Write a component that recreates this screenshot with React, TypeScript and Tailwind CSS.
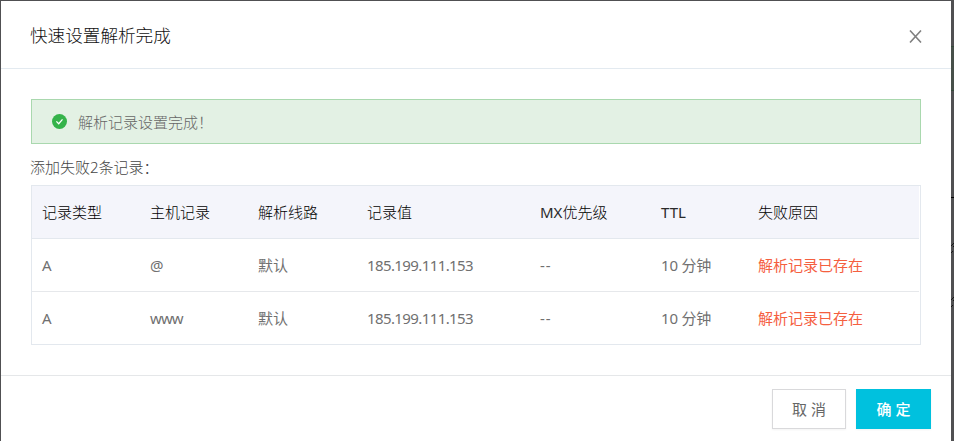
import React from "react";

type Row = {
  type: string;
  host: string;
  line: string;
  value: string;
  mx: string;
  ttl: string;
  reason: string;
};

const rows: Row[] = [
  { type: "A", host: "@", line: "默认", value: "185.199.111.153", mx: "--", ttl: "10 分钟", reason: "解析记录已存在" },
  { type: "A", host: "www", line: "默认", value: "185.199.111.153", mx: "--", ttl: "10 分钟", reason: "解析记录已存在" },
];

const columns = "grid grid-cols-[108px_108px_109px_173px_121px_97px_1fr] items-center pl-[10px] mr-px";

function CheckIcon() {
  return (
    <svg className="h-[15px] w-[15px] shrink-0" viewBox="0 0 15 15">
      <circle cx="7.5" cy="7.5" r="7.5" fill="#35b34a" />
      <path d="M4.4 7.4 L6.7 9.7 L10.5 5.3" fill="none" stroke="#fff" strokeWidth="1.3" />
    </svg>
  );
}

function CloseIcon() {
  return (
    <svg className="block h-[13px] w-[13px]" viewBox="0 0 13 13">
      <path d="M1 0.5 L12 12.5 M12 0.5 L1 12.5" fill="none" stroke="#808080" strokeWidth="1.6" />
    </svg>
  );
}

/* Sliver of the dimmed page visible beside the dialog. */
function Backdrop() {
  return (
    <svg className="absolute top-0 right-0 h-[441px] w-[3px]" viewBox="0 0 3 441" shapeRendering="crispEdges">
      <rect x="0" y="46" width="3" height="45" fill="#47504a" />
      <rect x="0" y="46" width="3" height="1" fill="#34493a" />
      <rect x="0" y="90" width="3" height="1" fill="#34493a" />
      <rect x="0" y="197" width="3" height="1" fill="#000" />
      <path d="M2 243h1v1h-1z M1 244h1v1h-1z M0 245h1v1h-1z M2 246h1v1h-1z M1 251h1v1h-1z M0 252h1v1h-1z" fill="#161616" />
      <path d="M2 297h1v1h-1z M1 298h1v1h-1z M0 299h1v1h-1z M2 300h1v1h-1z M1 305h1v1h-1z M0 306h1v1h-1z" fill="#161616" />
    </svg>
  );
}

function Header() {
  return (
    <header className="flex h-[68px] shrink-0 items-center justify-between border-b border-[#e3eaf0] pr-[29px] pl-[29px]">
      <h1 className="text-[17.6px] leading-6 font-light text-[#111]">快速设置解析完成</h1>
      <button className="mt-[4px]" aria-label="关闭">
        <CloseIcon />
      </button>
    </header>
  );
}

function RecordTable() {
  return (
    <section className="mt-[7px] h-[160px] border border-[#e3e8ee]">
      <div className={`${columns} h-[53px] border-b border-[#e3e8ee] bg-[#f4f5fb] font-light text-black`}>
        <span>记录类型</span>
        <span>主机记录</span>
        <span>解析线路</span>
        <span>记录值</span>
        <span>
          <span className="font-normal text-[#2a2a2a]">MX</span>优先级
        </span>
        <span className="font-normal text-[#2a2a2a]">TTL</span>
        <span>失败原因</span>
      </div>
      {rows.map((row, i) => (
        <div key={i} className={`${columns} text-[#707070] ${i === 0 ? "h-[53px] border-b border-[#e6e8eb]" : "h-[52px]"}`}>
          <span>{row.type}</span>
          <span className="tracking-[-0.9px]">{row.host}</span>
          <span>{row.line}</span>
          <span className="tracking-[-0.6px]">{row.value}</span>
          <span className="tracking-[0.8px]">{row.mx}</span>
          <span className="tracking-[-0.2px]">{row.ttl}</span>
          <span className="text-[#f5603f]">{row.reason}</span>
        </div>
      ))}
    </section>
  );
}

export default function App() {
  return (
    <div className="relative h-[441px] w-[954px] overflow-hidden bg-[#505052] pt-px pr-[3px] pl-px font-['Noto_Sans','Noto_Sans_CJK_SC',sans-serif] text-[15px] leading-[22px] font-normal text-[#666]">
      <Backdrop />
      <main className="flex h-full flex-col bg-white">
        <Header />
        <div className="h-[306px] shrink-0 px-[30px] pt-[30px]">
          <div className="flex h-[45px] items-center border border-[#a9d8ae] bg-[#e3f1e4] pl-[20px] font-light text-[#666]">
            <CheckIcon />
            <span className="ml-[11px]">解析记录设置完成！</span>
          </div>
          <p className="mt-[12px] -ml-px h-[22px] font-light text-[#444]">添加失败2条记录：</p>
          <RecordTable />
        </div>
        <footer className="flex flex-1 items-start justify-end gap-[10px] border-t border-[#e5e7e9] pt-[13px] pr-[20px]">
          <button className="h-[40px] w-[74px] border border-[#d9d9db] bg-white shadow-[0_1px_2px_rgba(0,0,0,0.05)]">取 消</button>
          <button className="h-[40px] w-[75px] bg-[#00c1de] font-medium text-white shadow-[0_1px_2px_rgba(0,0,0,0.05)]">确 定</button>
        </footer>
      </main>
    </div>
  );
}
